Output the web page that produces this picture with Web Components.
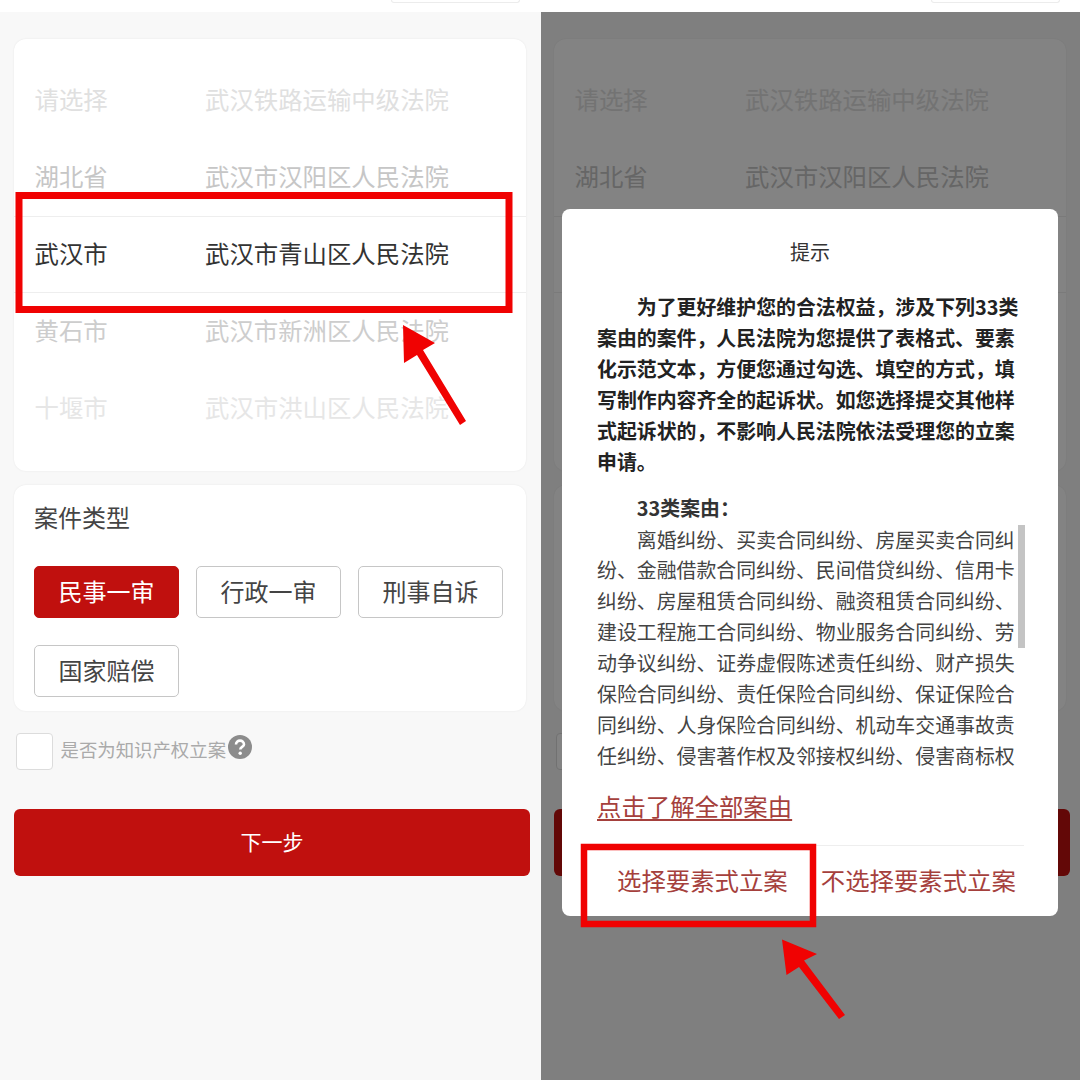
<!DOCTYPE html>
<html lang="zh-CN">
<head>
<meta charset="utf-8">
<title>立案</title>
<style>
html,body{margin:0;padding:0;background:#fff}
body{width:1080px;height:1080px;overflow:hidden;position:relative;font-family:"Noto Sans CJK SC","Noto Sans",sans-serif;color:#333}
</style>
</head>
<body>
<two-up>
  <filing-screen></filing-screen>
  <filing-screen dimmed>
    <dim-overlay slot="overlay">
      <notice-dialog>
        <span slot="title">提示</span>
        <span slot="lead">为了更好维护您的合法权益，涉及下列33类案由的案件，人民法院为您提供了表格式、要素化示范文本，方便您通过勾选、填空的方式，填写制作内容齐全的起诉状。如您选择提交其他样式起诉状的，不影响人民法院依法受理您的立案申请。</span>
        <span slot="heading">33类案由：</span>
        <span slot="list">离婚纠纷、买卖合同纠纷、房屋买卖合同纠纷、金融借款合同纠纷、民间借贷纠纷、信用卡纠纷、房屋租赁合同纠纷、融资租赁合同纠纷、建设工程施工合同纠纷、物业服务合同纠纷、劳动争议纠纷、证券虚假陈述责任纠纷、财产损失保险合同纠纷、责任保险合同纠纷、保证保险合同纠纷、人身保险合同纠纷、机动车交通事故责任纠纷、侵害著作权及邻接权纠纷、侵害商标权</span>
        <span slot="link">点击了解全部案由</span>
        <span slot="yes">选择要素式立案</span>
        <span slot="no">不选择要素式立案</span>
      </notice-dialog>
    </dim-overlay>
  </filing-screen>
</two-up>
<mark-layer></mark-layer>

<script>
function define(name, html, extra){
  customElements.define(name, class extends HTMLElement{
    constructor(){
      super();
      this.attachShadow({mode:'open'}).innerHTML = html;
    }
    connectedCallback(){ if(extra) extra.call(this); }
  });
}

define('two-up', `<style>:host{display:flex;width:1080px;height:1080px}</style><slot></slot>`);

define('picker-row', `<style>
:host{display:grid;grid-template-columns:170.5px 1fr;align-items:center;height:77px;box-sizing:border-box;padding:0 0 3px 20.5px;font-size:24.4px;line-height:34px;color:#e0e0e0}
:host([level="0"]){color:#333;border-top:1px solid #eee;border-bottom:1px solid #eee}
:host([level="1"]){color:#c6c6c6}
:host([level="1b"]){color:#cdcdcd}
:host([level="3"]){color:#e6e6e6}
</style><slot name="a"></slot><slot name="b"></slot>`);

define('court-picker', `<style>
:host{display:block;height:432px;box-sizing:border-box;padding-top:23px;margin:27px 14px 0;background:#fff;border-radius:12px;box-shadow:0 0 2px rgba(0,0,0,.08)}
</style><slot></slot>`);

define('type-button', `<style>
:host{display:flex;align-items:center;justify-content:center;width:145px;height:52px;box-sizing:border-box;border:1.5px solid #c6c6c6;border-radius:5px;background:#fff;color:#444;font-size:24px;line-height:34px;padding-bottom:2px}
:host([active]){background:#c0100e;border-color:#c0100e;color:#fff}
</style><slot></slot>`);

define('case-types', `<style>
:host{display:block;height:226px;box-sizing:border-box;margin:14px 14px 0;padding:15px 20px 0;background:#fff;border-radius:12px;box-shadow:0 0 2px rgba(0,0,0,.08)}
.t{font-size:24px;line-height:34px;color:#444;margin-bottom:32px}
.g{display:grid;grid-template-columns:repeat(3,145px);column-gap:17px;row-gap:27px}
</style><div class="t"><slot name="title"></slot></div><div class="g"><slot></slot></div>`);

define('option-check', `<style>
:host{display:flex;margin:22px 0 0 16px;height:37px}
.b{width:37px;height:37px;box-sizing:border-box;background:#fff;border:1px solid #dcdcdc;border-radius:4px;flex:none}
.l{margin-left:7.5px;font-size:18.4px;line-height:33px;color:#aaa;white-space:nowrap}
svg{display:block;margin:2px 0 0 2px;flex:none}
</style><div class="b"></div><div class="l"><slot></slot></div>
<svg width="24" height="24" viewBox="0 0 24 24"><circle cx="12" cy="12" r="12" fill="#8c8c8c"/><path d="M8 9.4a4 3.8 0 0 1 8 0c0 2.4-3.7 2.6-3.7 5" fill="none" stroke="#fff" stroke-width="2.6"/><circle cx="12.2" cy="18.3" r="1.7" fill="#fff"/></svg>`);

define('next-button', `<style>
:host{display:flex;align-items:center;justify-content:center;height:67px;width:516px;margin:39px 0 0 14px;background:#c0100e;border-radius:6px;color:#fff;font-size:21px;line-height:30px;padding-bottom:3px;box-sizing:border-box}
</style><slot></slot>`);

define('top-strip', `<style>
:host{display:flex;justify-content:flex-end;height:12px;background:#fff;padding-right:20px;box-sizing:border-box}
i{display:block;width:129px;height:3px;box-sizing:border-box;border:1px solid #ececec;border-top:0;border-radius:0 0 8px 8px}
</style><i></i>`);

define('filing-screen', `<style>
:host{display:block;position:relative;width:540px;height:1080px;background:#f8f8f8;overflow:hidden;flex:none}
</style>
<top-strip></top-strip>
<court-picker>
  <picker-row level="2"><span slot="a">请选择</span><span slot="b">武汉铁路运输中级法院</span></picker-row>
  <picker-row level="1"><span slot="a">湖北省</span><span slot="b">武汉市汉阳区人民法院</span></picker-row>
  <picker-row level="0"><span class="c" slot="a">武汉市</span><span class="c" slot="b">武汉市青山区人民法院</span></picker-row>
  <picker-row level="1b"><span class="c" slot="a">黄石市</span><span class="c" slot="b">武汉市新洲区人民法院</span></picker-row>
  <picker-row level="3"><span class="c" slot="a">十堰市</span><span class="c" slot="b">武汉市洪山区人民法院</span></picker-row>
</court-picker>
<case-types>
  <span class="c" slot="title">案件类型</span>
  <type-button active><span class="c">民事一审</span></type-button>
  <type-button><span class="c">行政一审</span></type-button>
  <type-button><span class="c">刑事自诉</span></type-button>
  <type-button><span class="c">国家赔偿</span></type-button>
</case-types>
<option-check><span class="c">是否为知识产权立案</span></option-check>
<next-button><span class="c">下一步</span></next-button>
<slot name="overlay"></slot>`, function(){
  /* Behind the open dialog, the words are covered: only the boxes show round its edge. */
  if(this.hasAttribute('dimmed')){
    this.shadowRoot.querySelectorAll('.c').forEach(function(e){ e.textContent=''; });
  }
});

define('dim-overlay', `<style>
:host{display:block;position:absolute;top:12px;left:1px;right:0;bottom:0;background:rgba(0,0,0,.485)}
</style><slot></slot>`);

define('notice-dialog', `<style>
:host{display:block;position:absolute;left:21px;top:197px;width:496px;height:707px;box-sizing:border-box;background:#fff;border-radius:8px;padding-top:28px;color:#333}
.title{text-align:center;font-size:20px;line-height:30px;color:#333}
.body{margin:0 0 0 35px;width:424px;font-size:19.9px}
.lead{margin-top:23.5px;font-weight:700;line-height:31px;text-indent:39.8px;color:#222}
.heading{margin-top:15.5px;font-weight:700;line-height:31px;text-indent:39.8px;color:#333}
.scroll{position:relative;width:428px;margin:1.5px 0 0 35px;height:247px;overflow:hidden}
.list{width:421px;font-size:19.9px;line-height:30.86px;text-indent:39.8px;color:#444}
.bar{position:absolute;right:0;top:0;width:7px;height:123px;background:#c4c4c4}
.link{margin:16.5px 0 0 35px;font-size:24.4px;line-height:36px;color:#a5403c;text-decoration:underline;text-underline-offset:3px}
.foot{display:flex;gap:33px;height:71px;align-items:center;margin:21px 34px 0 35px;padding:0 0 2px 20px;border-top:1px solid #eee;font-size:24.4px;line-height:34px;color:#a5403c;white-space:nowrap;box-sizing:border-box}
</style>
<div class="title"><slot name="title"></slot></div>
<div class="body lead"><slot name="lead"></slot></div>
<div class="body heading"><slot name="heading"></slot></div>
<div class="scroll"><div class="list"><slot name="list"></slot></div><div class="bar"></div></div>
<div class="link"><slot name="link"></slot></div>
<div class="foot"><slot name="yes"></slot><slot name="no"></slot></div>`);

define('mark-layer', `<style>
:host{display:block;position:absolute;left:0;top:0;width:1080px;height:1080px;pointer-events:none}
svg{display:block}
</style>
<svg width="1080" height="1080" viewBox="0 0 1080 1080">
  <rect x="19" y="195.5" width="490" height="114" fill="none" stroke="#f00202" stroke-width="7"/>
  <polygon fill="#f00202" points="403,325 435,343 423,350 466,421 460,425 417,355 404,363"/>
  <rect x="584" y="847" width="229" height="77" fill="none" stroke="#f00202" stroke-width="6.5"/>
  <polygon fill="#f00202" points="782,939.5 817,954 804,960.5 845,1015 839,1019 799,967 786.5,975"/>
</svg>`);
</script>
</body>
</html>
